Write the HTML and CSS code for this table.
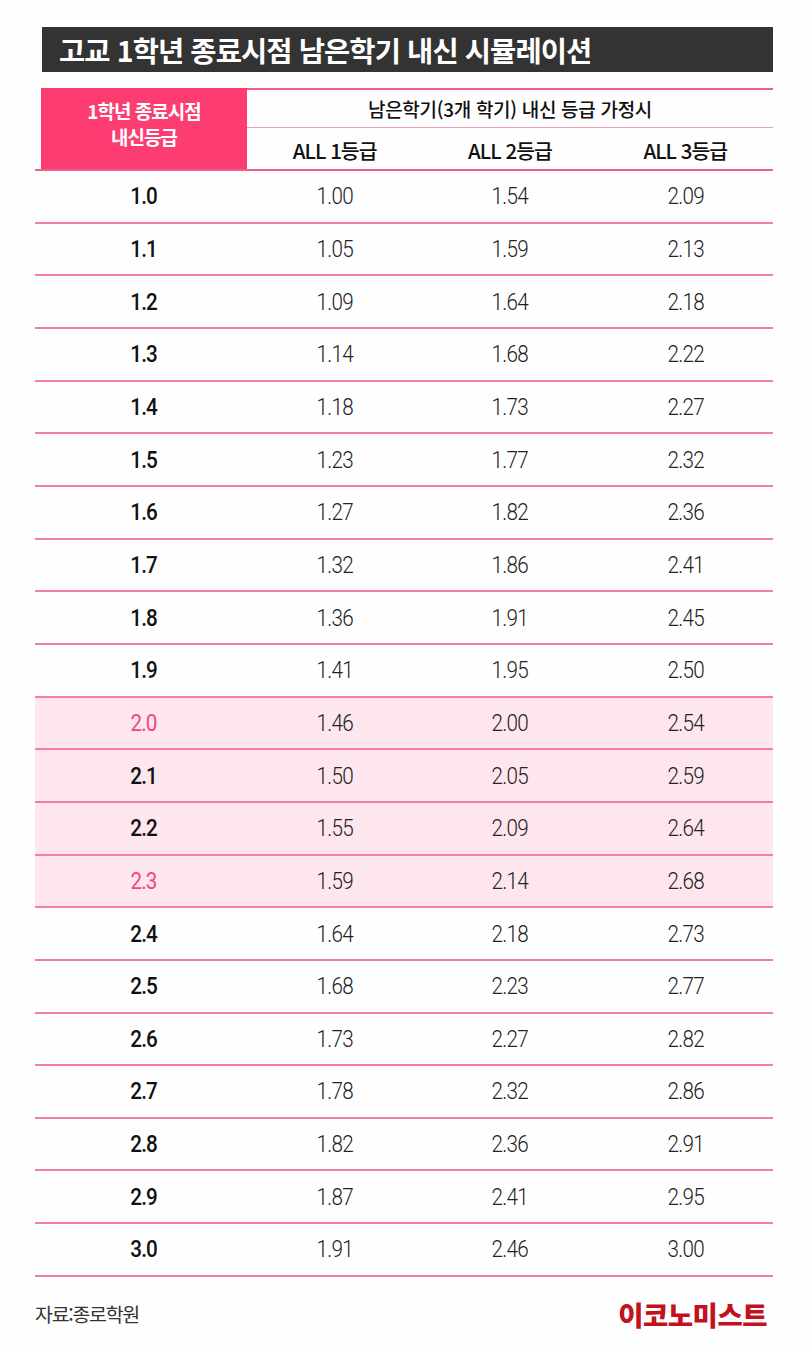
FILE: index.html
```html
<!DOCTYPE html>
<html lang="ko">
<head>
<meta charset="utf-8">
<title>고교 1학년 종료시점 남은학기 내신 시뮬레이션</title>
<link rel="stylesheet" href="styles.css">
</head>
<body>
<div class="page">
  <div class="title">고교 1학년 종료시점 남은학기 내신 시뮬레이션</div>
  <div class="table">
    <div class="head">
      <div class="head-first">1학년 종료시점<br>내신등급</div>
      <div class="head-rest">
        <div class="head-top">남은학기(3개 학기) 내신 등급 가정시</div>
        <div class="head-sub"><span>ALL 1등급</span><span>ALL 2등급</span><span>ALL 3등급</span></div>
      </div>
    </div>
    <div class="row"><span class="k">1.0</span><span>1.00</span><span>1.54</span><span>2.09</span></div>
    <div class="row"><span class="k">1.1</span><span>1.05</span><span>1.59</span><span>2.13</span></div>
    <div class="row"><span class="k">1.2</span><span>1.09</span><span>1.64</span><span>2.18</span></div>
    <div class="row"><span class="k">1.3</span><span>1.14</span><span>1.68</span><span>2.22</span></div>
    <div class="row"><span class="k">1.4</span><span>1.18</span><span>1.73</span><span>2.27</span></div>
    <div class="row"><span class="k">1.5</span><span>1.23</span><span>1.77</span><span>2.32</span></div>
    <div class="row"><span class="k">1.6</span><span>1.27</span><span>1.82</span><span>2.36</span></div>
    <div class="row"><span class="k">1.7</span><span>1.32</span><span>1.86</span><span>2.41</span></div>
    <div class="row"><span class="k">1.8</span><span>1.36</span><span>1.91</span><span>2.45</span></div>
    <div class="row"><span class="k">1.9</span><span>1.41</span><span>1.95</span><span>2.50</span></div>
    <div class="row hl"><span class="k pink">2.0</span><span>1.46</span><span>2.00</span><span>2.54</span></div>
    <div class="row hl"><span class="k">2.1</span><span>1.50</span><span>2.05</span><span>2.59</span></div>
    <div class="row hl"><span class="k">2.2</span><span>1.55</span><span>2.09</span><span>2.64</span></div>
    <div class="row hl"><span class="k pink">2.3</span><span>1.59</span><span>2.14</span><span>2.68</span></div>
    <div class="row"><span class="k">2.4</span><span>1.64</span><span>2.18</span><span>2.73</span></div>
    <div class="row"><span class="k">2.5</span><span>1.68</span><span>2.23</span><span>2.77</span></div>
    <div class="row"><span class="k">2.6</span><span>1.73</span><span>2.27</span><span>2.82</span></div>
    <div class="row"><span class="k">2.7</span><span>1.78</span><span>2.32</span><span>2.86</span></div>
    <div class="row"><span class="k">2.8</span><span>1.82</span><span>2.36</span><span>2.91</span></div>
    <div class="row"><span class="k">2.9</span><span>1.87</span><span>2.41</span><span>2.95</span></div>
    <div class="row"><span class="k">3.0</span><span>1.91</span><span>2.46</span><span>3.00</span></div>
  </div>
  <div class="footer">
    <span class="source">자료:종로학원</span>
    <span class="logo">이코노미스트</span>
  </div>
</div>
</body>
</html>
```
FILE: styles.css
```css
html, body {
  margin: 0;
  padding: 0;
  background: #fefefe;
}
.page {
  width: 811px;
  height: 1348px;
  box-sizing: border-box;
  padding: 27px 38px 0 35px;
  font-family: "Noto Sans CJK KR", "Noto Sans", sans-serif;
  color: #111;
}
.title {
  margin-left: 7px;
  height: 45px;
  background: #333333;
  color: #ffffff;
  font-size: 28.5px;
  font-weight: 700;
  letter-spacing: -0.9px;
  line-height: 45px;
  padding-left: 17px;
  box-sizing: border-box;
}
.table {
  margin-top: 16px;
}
.head {
  display: flex;
  height: 83px;
  border-bottom: 2px solid #ee5f8f;
  box-sizing: border-box;
}
.head-first {
  margin-left: 6px;
  width: 206px;
  background: #fd3d72;
  color: #ffffff;
  font-size: 19px;
  font-weight: 700;
  letter-spacing: -1px;
  line-height: 26px;
  display: flex;
  align-items: center;
  justify-content: center;
  text-align: center;
  padding-bottom: 10px;
  box-sizing: border-box;
}
.head-rest {
  flex: 1;
  display: flex;
  flex-direction: column;
  border-top: 2px solid #ee5f8f;
}
.head-top {
  height: 38px;
  border-bottom: 1.5px solid #f49bb8;
  box-sizing: border-box;
  display: flex;
  align-items: center;
  justify-content: center;
  font-size: 19px;
  font-weight: 500;
  letter-spacing: -0.3px;
  color: #111;
}
.head-sub {
  flex: 1;
  display: grid;
  grid-template-columns: 1fr 1fr 1fr;
  align-items: center;
  font-size: 20.5px;
  font-weight: 500;
  letter-spacing: -1px;
  color: #111;
}
.head-sub span {
  text-align: center;
  padding-top: 2px;
}
.row {
  display: grid;
  grid-template-columns: 212px 1fr 1fr 1fr;
  align-items: center;
  height: 52.67px;
  box-sizing: border-box;
  border-bottom: 2px solid #f17ea4;
  font-family: Roboto, "Noto Sans", sans-serif;
  font-size: 24px;
  font-weight: 300;
  letter-spacing: -0.8px;
  color: #222;
}
.row span {
  text-align: center;
  transform: scaleX(0.86);
}
.row .k {
  font-weight: 500;
  color: #111;
  padding-left: 6px;
  letter-spacing: -1px;
}
.row .k.pink {
  color: #f5467c;
  font-weight: 400;
}
.row.hl {
  background: #fde6ed;
}
.footer {
  display: flex;
  justify-content: space-between;
  align-items: center;
  padding-top: 22px;
  padding-right: 6px;
}
.source {
  font-size: 19.5px;
  color: #333;
  letter-spacing: -1.3px;
}
.logo {
  font-size: 27.5px;
  font-weight: 900;
  color: #c3111e;
  letter-spacing: -0.5px;
  line-height: 30px;
}
```
